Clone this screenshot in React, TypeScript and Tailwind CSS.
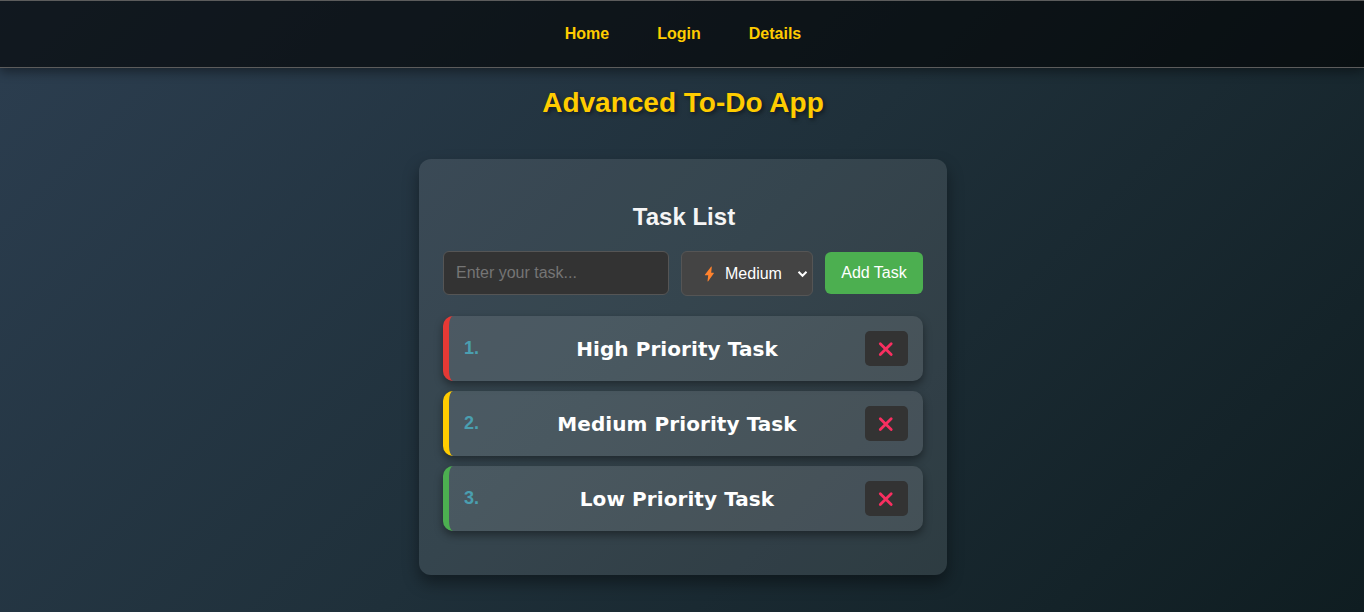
import { useState } from 'react';

const initialTasks = [
  { title: 'High Priority Task', border: 'border-l-[#e53935]' },
  { title: 'Medium Priority Task', border: 'border-l-[#ffcc00]' },
  { title: 'Low Priority Task', border: 'border-l-[#4caf50]' },
];

const links = ['Home', 'Login', 'Details'];

function Bolt() {
  return (
    <svg className="ml-[22px] h-4 w-[12px] shrink-0" viewBox="0 0 12 16">
      <path d="M7.2 0.5 L0.9 8.7 Q0.7 9.2 1.2 9.2 H4.2 L3.5 15.3 L4 15.5 L9.9 7.3 Q10 6.7 9.5 6.7 H7.2 L7.8 0.7 Z" fill="#ff822d" />
    </svg>
  );
}

function Cross() {
  return (
    <svg className="mr-px h-[14px] w-[14px] overflow-visible" viewBox="0 0 14 14" fill="none" stroke="#f92f60" strokeWidth="2.8" strokeLinecap="round">
      <path d="M1.3 1.8 L12.2 12.6 M12.2 1.8 L1.3 12.6" />
    </svg>
  );
}

export default function App() {
  const [tasks, setTasks] = useState(initialTasks);
  const [text, setText] = useState('');

  const addTask = () => {
    if (!text.trim()) return;
    setTasks([...tasks, { title: text, border: 'border-l-[#ffcc00]' }]);
    setText('');
  };

  return (
    <div className="flex min-h-[612px] flex-col bg-[linear-gradient(135deg,#2c3e50,#1f303a_50%,#0f1d21)] font-['Liberation_Sans',Arial,sans-serif] text-[#f5f5f5]">
      <nav className="flex h-[68px] w-full shrink-0 items-center justify-center gap-12 border-y border-[#5c5c5c] bg-black/60 pl-0.5 shadow-[0_4px_10px_rgba(0,0,0,0.4)]">
        {links.map((link) => (
          <a key={link} href="#" className="text-base leading-[18px] font-bold text-[#ffcc00]">
            {link}
          </a>
        ))}
      </nav>
      <div className="flex flex-col items-center pl-0.5">
        <h1 className="mt-[18px] text-[28px] leading-[33px] font-bold text-[#ffcc00] [text-shadow:2px_2px_4px_rgba(0,0,0,0.5)]">
          Advanced To-Do App
        </h1>
        <main className="mt-10 flex min-h-[416px] w-[528px] flex-col rounded-xl bg-white/10 px-6 pt-11 shadow-[0_8px_16px_rgba(0,0,0,0.4)]">
          <h2 className="pl-0.5 text-center text-2xl leading-[28px] font-bold">Task List</h2>
          <div className="mt-5 flex h-[45px] items-start gap-3">
            <input
              value={text}
              onChange={(e) => setText(e.target.value)}
              placeholder="Enter your task..."
              className="h-11 w-[226px] rounded-md border border-[#555] bg-[#333] px-3 text-base text-white outline-none placeholder:text-[#757575]"
            />
            <button className="flex h-[45px] w-[132px] items-center rounded-md border border-[#555] bg-[#444] text-base text-white">
              <Bolt />
              <span className="ml-[9px]">Medium</span>
              <svg className="ml-[15px] h-2 w-[11px]" viewBox="0 0 11 8" fill="none" stroke="white" strokeWidth="2">
                <path d="M1.5 1.8 L5.5 5.8 L9.5 1.8" />
              </svg>
            </button>
            <button onClick={addTask} className="mt-px h-[42px] w-[98px] rounded-md bg-[#4caf50] text-base text-white">
              Add Task
            </button>
          </div>
          <ul className="mt-5 flex flex-col gap-2.5">
            {tasks.map((task, i) => (
              <li
                key={i}
                className={`flex h-[65px] items-center rounded-[10px] border-l-[6px] bg-white/10 px-[15px] shadow-[0_4px_8px_rgba(0,0,0,0.4)] ${task.border}`}
              >
                <span className="mr-2.5 pb-0.5 text-[18px] leading-5 font-bold text-[#4a9fb0]">{i + 1}.</span>
                <span className="flex-1 text-center font-['DejaVu_Sans',Verdana,sans-serif] text-[20px] leading-6 font-bold tracking-[0.08px] text-white">
                  {task.title}
                </span>
                <button
                  aria-label="Delete task"
                  onClick={() => setTasks(tasks.filter((_, j) => j !== i))}
                  className="flex h-[35px] w-[43px] items-center justify-center rounded-[5px] bg-[#333]"
                >
                  <Cross />
                </button>
              </li>
            ))}
          </ul>
        </main>
      </div>
    </div>
  );
}
